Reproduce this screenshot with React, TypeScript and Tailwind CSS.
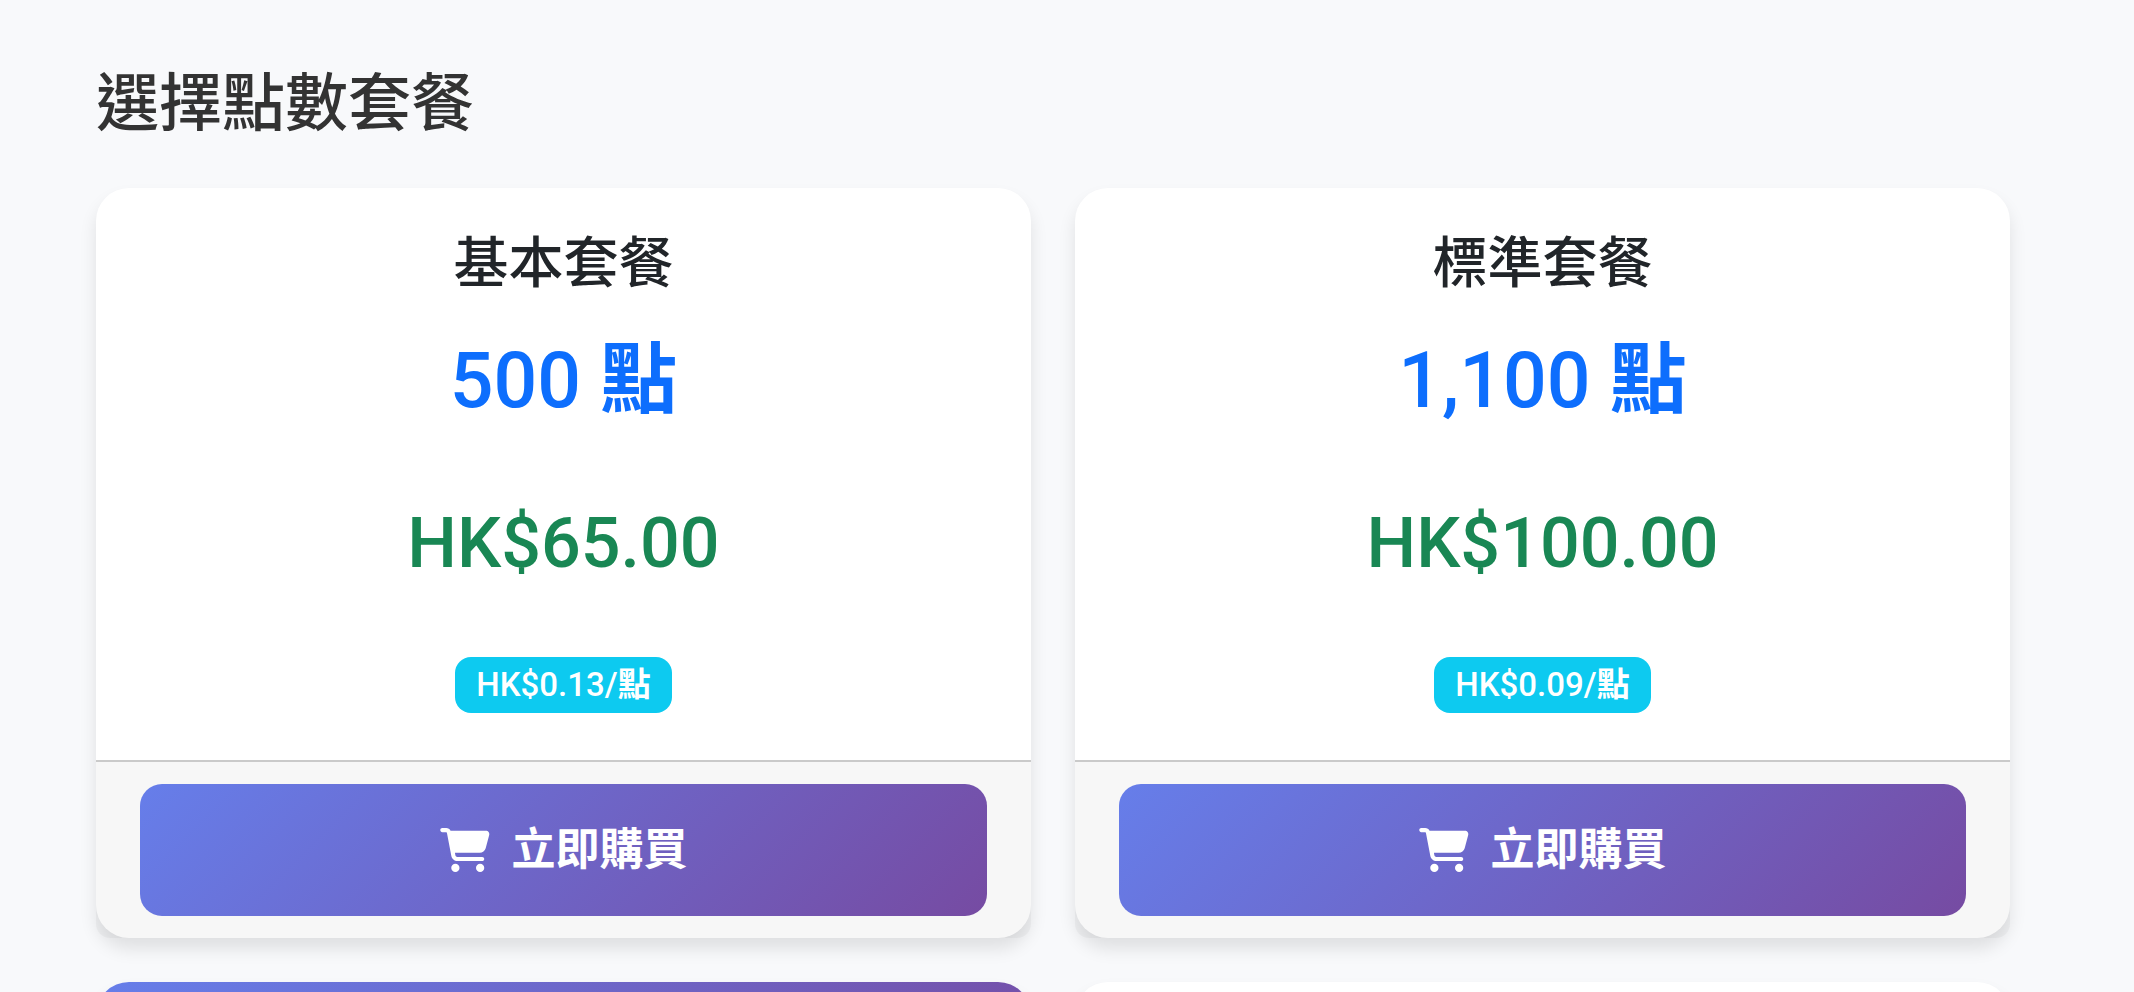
import { FaCartShopping } from 'react-icons/fa6';

type Plan = {
  name: string;
  points: string;
  price: string;
  unitPrice: string;
};

const plans: Plan[] = [
  { name: '基本套餐', points: '500', price: 'HK$65.00', unitPrice: 'HK$0.13' },
  { name: '標準套餐', points: '1,100', price: 'HK$100.00', unitPrice: 'HK$0.09' }
];

function PlanCard({ plan }: { plan: Plan }) {
  return (
    <article className="flex flex-col rounded-[33px] bg-white shadow-[0_11px_17px_rgba(0,0,0,0.1)]">
      <div className="flex flex-1 flex-col items-center px-11 pt-[42px] pb-[47px] text-center">
        <h5 className="text-[55px] leading-[66px] font-medium text-[#212529]">{plan.name}</h5>
        <h2 className="mt-[38px] text-[77px] leading-[94px] font-medium text-[#0d6efd]">
          {plan.points} <span className="font-bold">點</span>
        </h2>
        <p className="mt-[73px] text-[70px] leading-[84px] font-medium text-[#198754]">{plan.price}</p>
        <span className="mt-[72px] rounded-2xl bg-[#0dcaf0] px-[21px] py-3 text-[33px] leading-8 font-medium text-white">
          {plan.unitPrice}/<span className="font-bold">點</span>
        </span>
      </div>
      <div className="rounded-b-[14px] border-t-2 border-[#cacaca] bg-black/3 px-11 py-[22px]">
        <button
          type="button"
          className="flex h-[132px] w-full items-center justify-center gap-[22px] rounded-[22px] bg-[linear-gradient(135deg,#667eea_0%,#764ba2_100%)] text-[44px] leading-[66px] font-bold text-white"
        >
          <FaCartShopping className="h-11 w-[50px]" aria-hidden="true" />
          立即購買
        </button>
      </div>
    </article>
  );
}

export default function App() {
  return (
    <main className="h-screen overflow-hidden bg-[#f8f9fb] pt-[66px] pr-[124px] pl-24 font-[Roboto,'Noto_Sans_CJK_TC',sans-serif]">
      <h4 className="mb-[46px] text-[63px] leading-[76px] font-medium text-[#333333]">選擇點數套餐</h4>
      <div className="grid grid-cols-2 gap-11">
        {plans.map((plan) => (
          <PlanCard key={plan.name} plan={plan} />
        ))}
        <article className="overflow-hidden rounded-[33px] bg-white shadow-[0_11px_17px_rgba(0,0,0,0.1)]">
          <div className="h-[132px] bg-[linear-gradient(135deg,#667eea_0%,#764ba2_100%)]" />
        </article>
        <article className="rounded-[33px] bg-white shadow-[0_11px_17px_rgba(0,0,0,0.1)]" />
      </div>
    </main>
  );
}
